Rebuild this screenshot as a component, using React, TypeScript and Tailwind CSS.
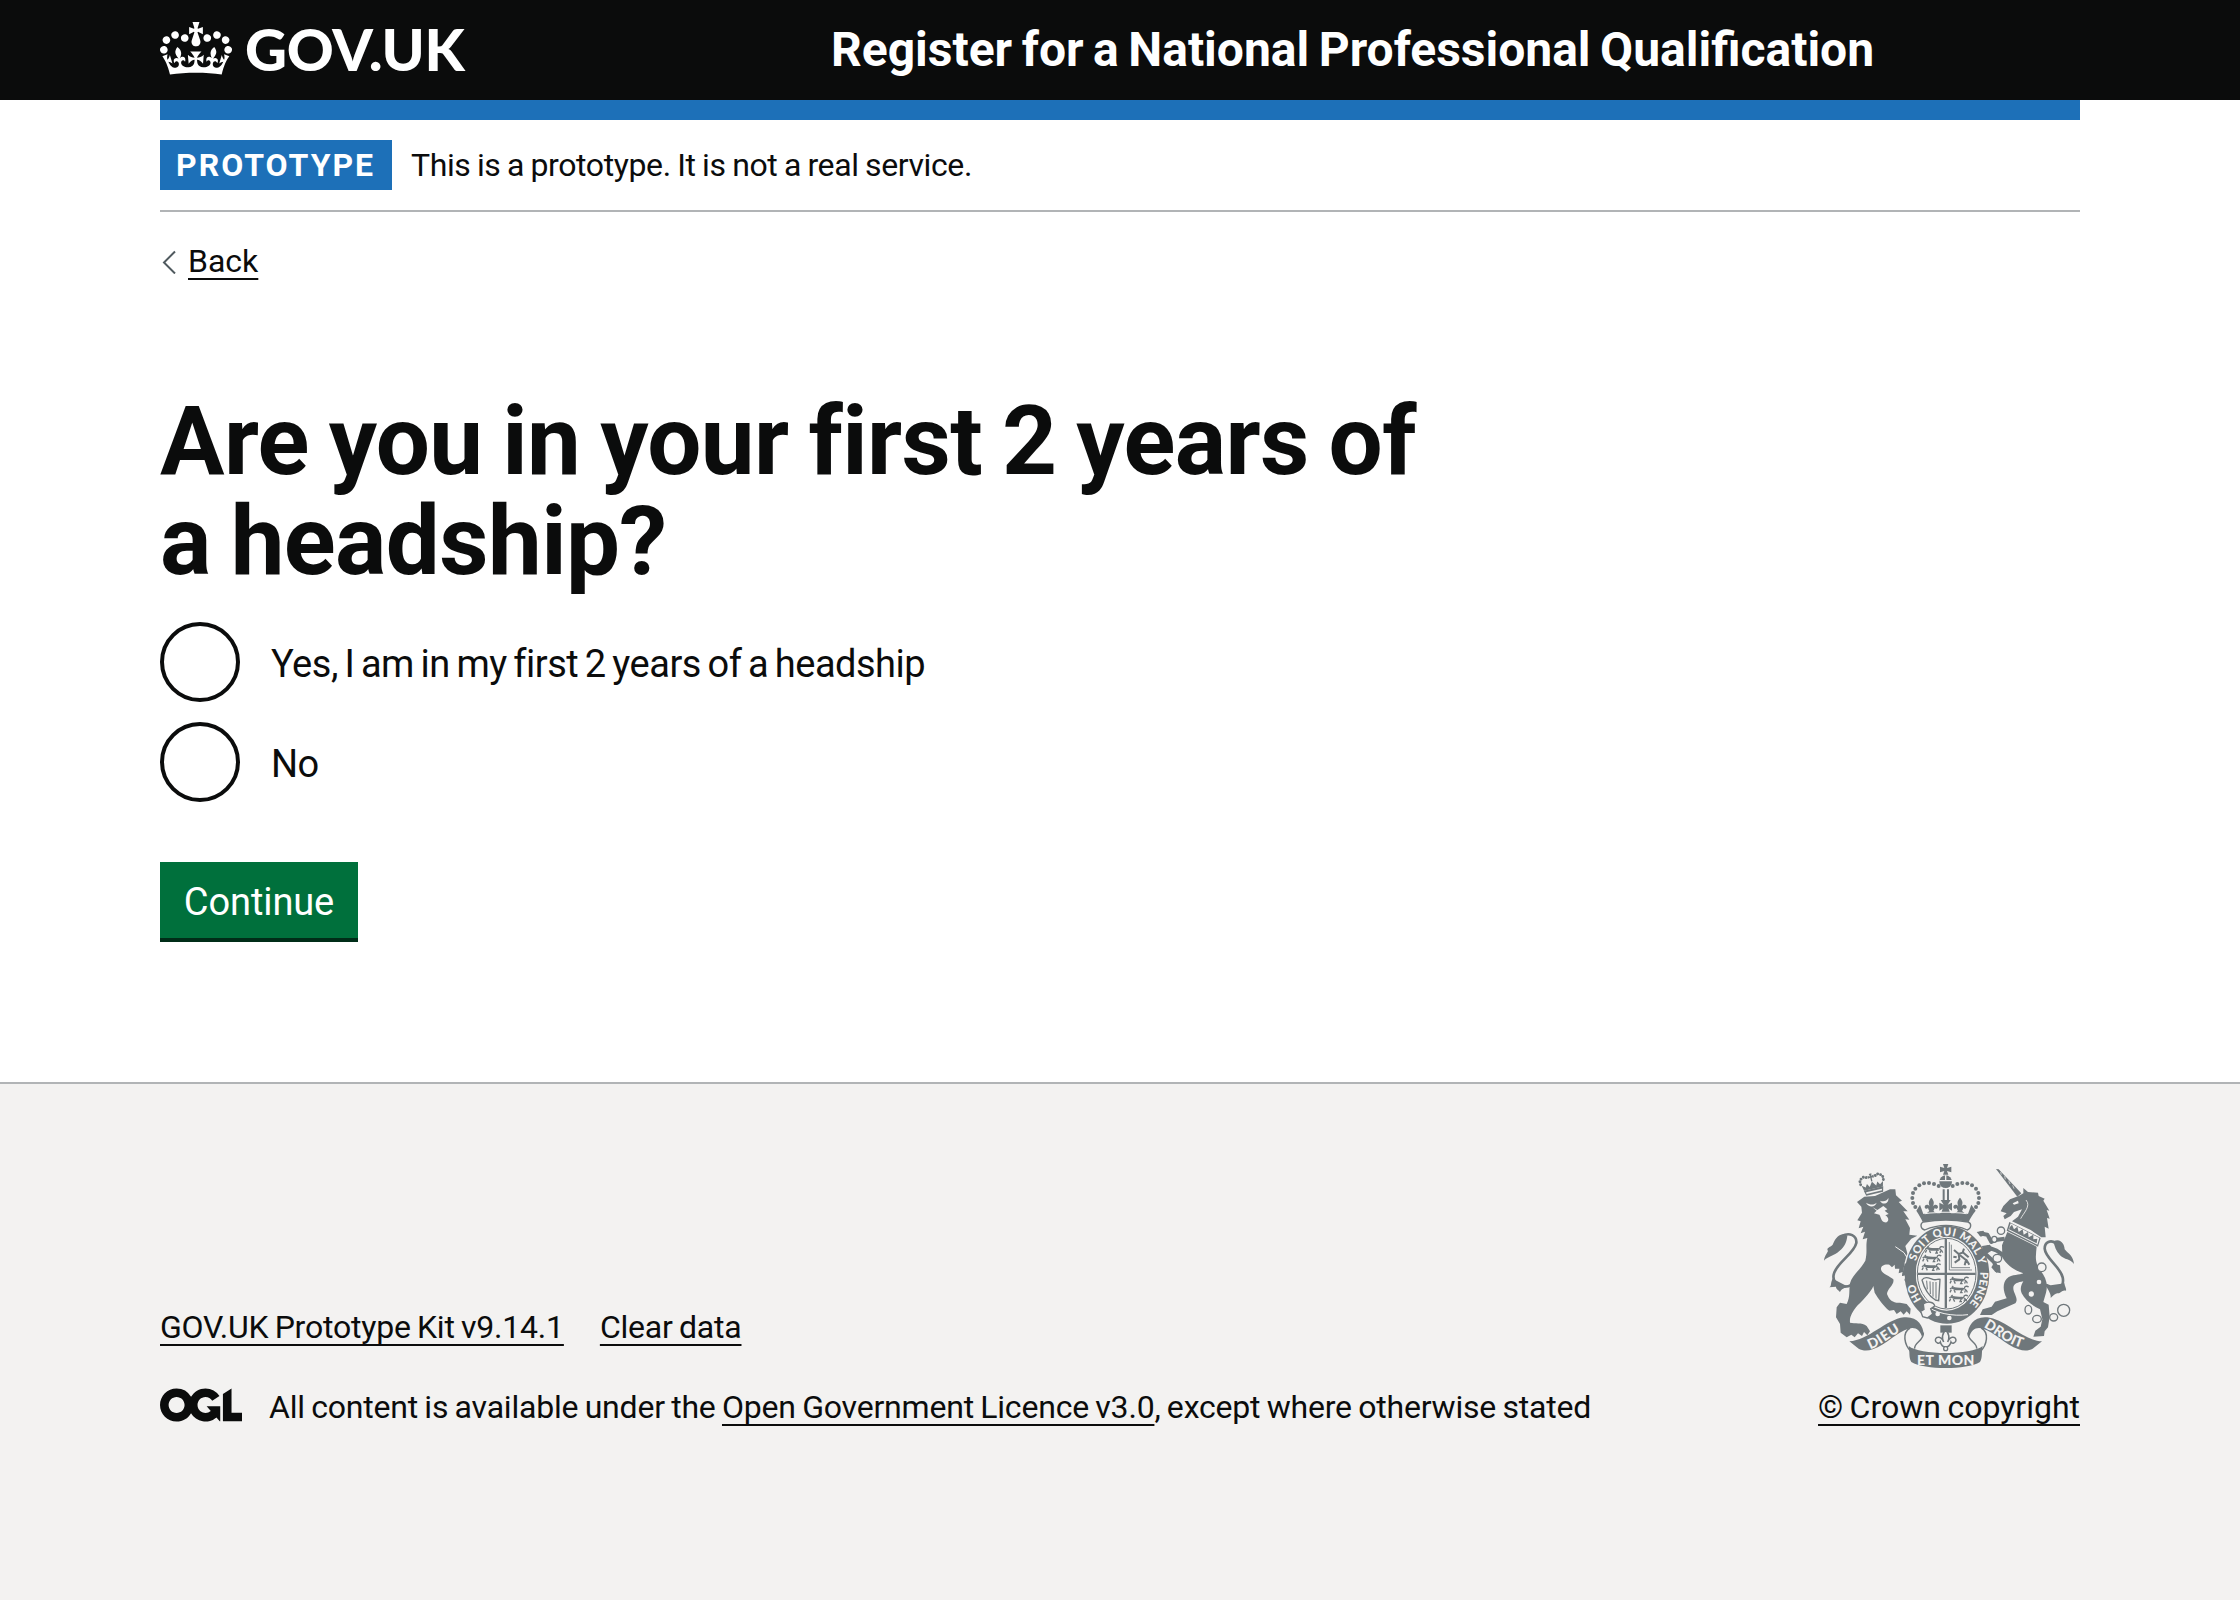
import React from "react";

const LINK =
  "text-[#0b0c0c] underline decoration-2 underline-offset-[6px] [text-decoration-skip-ink:none]";

function Crown() {
  return (
    <svg viewBox="0 0 132 97" className="h-[53px] w-[72px] -translate-y-[2px]" fill="currentColor" aria-hidden="true">
      <path
        fillRule="evenodd"
        d="M25 30.2c3.5 1.5 7.7-.2 9.1-3.7 1.5-3.6-.2-7.8-3.9-9.2-3.6-1.4-7.6.3-9.1 3.9-1.4 3.5.3 7.5 3.9 9zM9 39.5c3.6 1.5 7.8-.2 9.2-3.7 1.5-3.6-.2-7.8-3.9-9.1-3.6-1.5-7.6.2-9.1 3.8-1.4 3.5.3 7.5 3.8 9zM4.4 57.2c3.5 1.5 7.7-.2 9.1-3.8 1.5-3.6-.2-7.7-3.9-9.1-3.5-1.5-7.6.3-9.1 3.8-1.4 3.5.3 7.6 3.9 9.1zm38.3-21.4c3.5 1.5 7.7-.2 9.1-3.8 1.5-3.6-.2-7.7-3.9-9.1-3.6-1.5-7.6.3-9.1 3.8-1.3 3.6.4 7.7 3.9 9.1zm64.4-5.6c-3.6 1.5-7.8-.2-9.1-3.7-1.5-3.6.2-7.8 3.8-9.2 3.6-1.4 7.7.3 9.2 3.9 1.3 3.5-.4 7.5-3.9 9zm15.9 9.3c-3.6 1.5-7.7-.2-9.1-3.7-1.5-3.6.2-7.8 3.7-9.1 3.6-1.5 7.7.2 9.2 3.8 1.5 3.5-.3 7.5-3.8 9zm4.7 17.7c-3.6 1.5-7.8-.2-9.2-3.8-1.5-3.6.2-7.7 3.9-9.1 3.6-1.5 7.7.3 9.2 3.8 1.3 3.5-.4 7.6-3.9 9.1zM89.3 35.8c-3.6 1.5-7.8-.2-9.2-3.8-1.4-3.6.2-7.7 3.9-9.1 3.6-1.5 7.7.3 9.2 3.8 1.4 3.6-.3 7.7-3.9 9.1zM69.7 17.7l8.9 4.7V9.3l-8.9 2.8c-.2-.3-.5-.6-.9-.9L72.4 0H59.6l3.5 11.2c-.3.3-.6.5-.9.9l-8.8-2.8v13.1l8.8-4.7c.3.3.6.7.9.9l-5 15.4v.1c-.2.8-.4 1.6-.4 2.4 0 4.1 3.1 7.5 7 8.1h.2c.3 0 .7.1 1 .1.4 0 .7 0 1-.1h.2c4-.6 7.1-4.1 7.1-8.1 0-.8-.1-1.7-.4-2.4V34l-5.1-15.4c.4-.2.7-.6 1-.9zM66 92.8c16.9 0 32.8 1.1 47.1 3.2 4-16.9 8.9-26.7 14-33.5l-9.6-3.4c1 4.9 1.1 7.2 0 10.2-1.5-1.4-3-4.3-4.2-8.7L108.6 76c2.8-2 5-3.2 7.5-3.3-4.4 9.4-10 11.9-13.6 11.2-4.3-.8-6.3-4.6-5.6-7.9 1-4.7 5.7-5.9 8-.5 4.3-8.7-3-11.4-7.6-8.8 7.1-7.2 7.9-13.5 2.1-21.1-8 6.1-8.1 12.3-4.5 20.8-4.7-5.4-12.1-2.5-9.5 6.2 3.4-5.2 7.9-2 7.2 3.1-.6 4.3-6.4 7.8-13.5 7.2-10.3-.9-10.9-8-11.2-13.8 2.5-.5 7.1 1.8 11 7.3L80.2 60c-4.1 4.4-8 5.3-12.3 5.4 1.4-4.4 8-11.6 8-11.6H55.5s6.4 7.2 7.9 11.6c-4.2-.1-8-1-12.3-5.4l1.4 16.4c3.9-5.5 8.5-7.7 10.9-7.3-.3 5.8-.9 12.8-11.1 13.8-7.2.6-12.9-2.9-13.5-7.2-.7-5 3.8-8.3 7.1-3.1 2.7-8.7-4.6-11.6-9.4-6.2 3.7-8.5 3.6-14.7-4.6-20.8-5.8 7.6-5 13.9 2.2 21.1-4.7-2.6-11.9.1-7.7 8.8 2.3-5.5 7.1-4.2 8.1.5.7 3.3-1.3 7.1-5.7 7.9-3.5.7-9-1.8-13.5-11.2 2.5.1 4.7 1.3 7.5 3.3l-4.7-15.4c-1.2 4.4-2.7 7.2-4.3 8.7-1.1-3-.9-5.3 0-10.2l-9.5 3.4c5 6.9 9.9 16.7 14 33.5 14.8-2.1 30.8-3.2 47.7-3.2z"
      />
    </svg>
  );
}

function OglLogo() {
  return (
    <svg viewBox="0 0 483.2 195.7" className="mt-px h-[34px] w-[82px] shrink-0" fill="#0b0c0c" aria-hidden="true">
      <path d="M421.5 142.8V.1l-50.7 32.3v161.1h112.4v-50.7zm-122.3-9.6A47.12 47.12 0 0 1 221 97.8c0-26 21.1-47.1 47.1-47.1 16.7 0 31.4 8.7 39.7 21.8l42.7-27.2A97.63 97.63 0 0 0 268.1 0c-36.5 0-68.3 20.1-85.1 49.7A98 98 0 0 0 97.8 0C43.9 0 0 43.9 0 97.8s43.9 97.8 97.8 97.8c36.5 0 68.3-20.1 85.1-49.7a97.76 97.76 0 0 0 149.6 25.4l19.4 22.2h3v-87.8h-80l24.3 27.5zM97.8 145c-26 0-47.1-21.1-47.1-47.1s21.1-47.1 47.1-47.1 47.1 21.1 47.1 47.1S123.8 145 97.8 145" />
    </svg>
  );
}

const INK = "#6f777b";
const PAPER = "#f3f2f1";

const ARCH_BEADS = [
  [386, 108],
  [372, 102],
  [357, 99],
  [342, 100],
  [328, 106],
  [316, 116],
  [309, 129],
  [307, 144],
  [309, 159],
  [316, 171],
];

/* Passant lion used in the three rows of the English quarters. */
function Passant({ x, y }: { x: number; y: number }) {
  return (
    <g transform={`translate(${x} ${y})`}>
      <path
        d="M4 10C10 4 16 6 20 9L42 8C50 9 54 13 56 20M8 12L4 20M16 13L20 21M40 12L36 21L42 21M50 14L48 21M10 5L14 1M48 8C46 2 54 0 60 4"
        fill="none"
        stroke={INK}
        strokeWidth="4"
      />
      <path d="M6 8L18 5L42 8L46 14L20 14Z" />
    </g>
  );
}

function Fleur({ x, y }: { x: number; y: number }) {
  return (
    <g transform={`translate(${x} ${y})`}>
      <path d="M0-25C8-16 10-9 4 2C9-6 19-6 20 3C20 9 12 10 10 6C9 12 5 15 3 20H-3C-5 15-9 12-10 6C-12 10-20 9-20 3C-19-6-9-6-4 2C-10-9-8-16 0-25Z" />
    </g>
  );
}

function RoyalArms() {
  return (
    <svg viewBox="42 42 750 612" className="h-[204px] w-[250px]" fill={INK} aria-hidden="true">
      <defs>
        <path id="garter-honi" d="M335 449A99 117 0 0 1 312 364" />
        <path id="garter-motto" d="M318 334A99 117 0 0 1 510 380" />
        <path id="garter-end" d="M510 366A99 117 0 0 1 455 479" />
        <path id="scroll-left" d="M180 597C215 587 243 556 286 537" />
        <path id="scroll-right" d="M520 531C560 552 590 583 640 594" />
      </defs>

      {/* Lion */}
      <path
        fill="none"
        stroke={INK}
        strokeWidth="8"
        d="M126 404C96 420 66 400 71 374C77 340 132 312 139 279C141 256 118 246 96 258"
      />
      <path d="M112 257C86 244 74 270 68 284C60 292 48 293 54 303C50 312 42 320 42 332C54 318 72 318 88 303C104 290 110 276 112 257Z" />
      <path d="M68 386C60 402 66 406 58 412L78 410C78 418 86 420 90 426C94 416 104 416 110 408Z" />
      <path d="M141 156L163 140L195 138L240 118L256 118L258 136L276 152L266 156L293 184L280 184L298 209L286 208L300 234L298 254L322 257L304 266L286 288L292 310L318 342L319 367L312 398L300 398L297 388L288 398L283 388L288 374L276 378L278 366L266 370L268 356L255 356L254 344L246 352L238 344C222 342 212 348 213 358C215 372 240 378 250 388C254 404 232 415 231 432C238 452 252 460 270 458L290 462L302 476L300 494L290 484L281 494L272 484L260 492L252 480L238 482C220 468 205 446 194 428L190 408C185 422 165 445 143 466C128 484 118 500 120 518C135 522 155 516 170 528L180 544L172 556L162 546L156 558L144 550L134 562L124 554L110 562L92 548L90 522L78 502L80 472L90 458L110 462C122 440 116 420 120 400C126 376 152 358 166 332C173 302 166 290 172 264L158 268L165 245L152 250L160 230L146 235L152 214L142 211L156 188L154 170Z" />
      <path fill={PAPER} d="M168 158C178 164 192 166 200 158C196 172 176 174 168 158ZM210 152C220 156 230 154 235 144C238 160 218 168 210 152ZM188 172L202 180L220 168L232 178L224 182L236 192L226 196C240 204 236 220 224 217C212 213 214 202 208 194L192 190L200 182Z" />
      <path fill="none" stroke={PAPER} strokeWidth="3" d="M256 290L282 308L298 334L290 330" />
      <g transform="rotate(-13 188 105)">
        <path d="M158 116H218L214 132H162Z" />
        <path fill={PAPER} d="M164 122H212V127H164Z" />
        <path d="M159 116L155 100L166 108L172 98L178 109L188 95L198 109L204 98L210 108L221 100L217 116Z" />
        <path d="M184 70H192L190 78L197 75V84L190 82V94H186V82L179 84V75L186 78Z" />
        {[
          [153, 96],
          [153, 87],
          [158, 80],
          [166, 76],
          [174, 79],
          [202, 79],
          [210, 76],
          [218, 80],
          [223, 87],
          [223, 96],
        ].map(([x, y]) => (
          <circle key={`${x}-${y}`} cx={x} cy={y} r="4.4" />
        ))}
      </g>

      {/* Unicorn */}
      <path
        fill="none"
        stroke={INK}
        strokeWidth="8"
        d="M708 404C740 430 764 412 758 382C750 348 706 326 704 296C704 276 722 268 738 280"
      />
      <path d="M730 274C752 262 764 284 764 298C776 312 790 318 792 342C780 326 764 330 750 316C738 304 734 290 730 274ZM704 400L722 406L764 400C762 406 770 414 768 422C756 418 752 430 744 430C738 428 730 436 722 444C724 430 712 418 704 400Z" />
      <path d="M558 57L566 58L634 130L622 140Z" />
      <path fill="none" stroke={PAPER} strokeWidth="2" d="M572 66L574 74M584 78L586 88M596 92L600 102M608 106L612 116" />
      <path d="M640 114L654 126L684 128L686 138L704 146L700 152L718 182L710 180L719 206L711 204L716 236L704 230L707 262L694 262L662 240L606 214L624 200L636 178L612 186L602 198L584 208L580 198L590 190L572 184L580 168L600 148L626 138L640 130Z" />
      <path fill={PAPER} d="M608 160L624 152L626 160L612 164Z" />
      <path fill="none" stroke={PAPER} strokeWidth="2.5" d="M648 150C664 168 640 190 632 206" />
      <path d="M598 216L692 264L684 290L590 242Z" />
      <path fill={PAPER} d="M602 220L688 264L682 284L595 240Z" />
      <path d="M599 232L606 224L612 238L622 230L626 246L638 238L641 254L654 246L656 262L670 254L670 268L682 266L680 280L597 238Z" />
      <path d="M592 246L680 290C678 314 672 336 692 362C707 382 715 402 708 428L700 456L716 464L719 500L714 532L704 544L702 558L670 560L676 542L692 530L697 508L690 478C668 468 645 450 635 430C628 414 636 402 640 394C620 398 604 402 612 425C618 440 624 450 616 460L562 484L545 495L510 495L518 478L545 470L555 455L590 445C578 420 578 400 590 386C606 372 630 376 640 370C614 362 590 345 577 322L576 286Z" />

      {/* Garter and shield */}
      <ellipse cx="411" cy="374" rx="131" ry="151" fill={PAPER} />
      <ellipse cx="411" cy="374" rx="127" ry="147" />
      <ellipse cx="410" cy="371" rx="93" ry="111" fill={PAPER} />
      <ellipse cx="410" cy="371" rx="88" ry="106" fill="none" stroke={INK} strokeWidth="3" />
      <path d="M404 266H411V474H404ZM323 368H497V375H323Z" />
      <Passant x={342} y={288} />
      <Passant x={334} y={314} />
      <Passant x={332} y={340} />
      <Passant x={416} y={380} />
      <Passant x={416} y={407} />
      <Passant x={414} y={434} />
      <path fill="none" stroke={INK} strokeWidth="2.5" d="M418 276V360H486M424 284V353H480" />
      <path
        fill="none"
        stroke={INK}
        strokeWidth="6"
        strokeLinejoin="round"
        d="M432 300L446 312L458 308L462 296M446 312L448 328L434 338M450 316L468 330L464 346M460 308L476 322M440 322L430 320M468 328L478 344"
      />
      <path
        fill="none"
        stroke={INK}
        strokeWidth="4"
        d="M336 390C344 378 356 384 368 388C378 392 384 386 390 388L386 452L376 450C360 440 344 420 336 390Z"
      />
      <path fill="none" stroke={INK} strokeWidth="3" d="M350 392L352 418M360 394L361 432M369 396L369 440M378 396L378 446" />
      <path fill="none" stroke={PAPER} strokeWidth="3" d="M344 462C370 490 430 500 474 494" />
      <path fill={PAPER} stroke={INK} strokeWidth="4" d="M340 462C352 452 372 456 374 468L362 476L368 492L352 504L338 500L332 484L342 478Z" />
      <circle cx="383" cy="492" r="7" fill={PAPER} />
      <circle cx="418" cy="504" r="7" fill={PAPER} />
      <g fill={PAPER} fontFamily="Lato" fontSize="33" fontWeight="900">
        <text>
          <textPath href="#garter-honi">HO</textPath>
        </text>
        <text letterSpacing="1.5">
          <textPath href="#garter-motto">SOIT QUI MAL Y</textPath>
        </text>
        <text>
          <textPath href="#garter-end">PENSE</textPath>
        </text>
      </g>
      <path d="M284 340L318 352L318 396L304 400L299 390L289 400L283 390L288 376L276 378Z" />
      <path
        fill="none"
        stroke={INK}
        strokeWidth="12"
        strokeLinejoin="round"
        d="M584 266L556 270L544 276L532 254L508 250M584 318L560 302L534 292L524 310L552 336L564 366"
      />
      <path d="M500 246L520 242L528 254L512 260ZM516 288L540 284L548 300L520 318ZM550 342L570 346L572 370L556 366L544 352Z" />
      <g fill={PAPER} stroke={INK} strokeWidth="4">
        <ellipse cx="573" cy="242" rx="11" ry="11" />
        <ellipse cx="553" cy="268" rx="8" ry="9" />
        <ellipse cx="562" cy="325" rx="13" ry="12" />
        <circle cx="695" cy="352" r="13" />
        <circle cx="687" cy="396" r="9" />
        <circle cx="664" cy="432" r="10" />
        <ellipse cx="655" cy="479" rx="10" ry="13" />
        <ellipse cx="681" cy="507" rx="13" ry="11" />
        <ellipse cx="731" cy="502" rx="12" ry="11" />
        <circle cx="761" cy="481" r="18" />
      </g>

      {/* Crown */}
      <path d="M399 42H415L411 54L424 50V67L411 63L415 74H399L403 63L390 67V50L403 54Z" />
      <circle cx="407" cy="95" r="19" />
      <path fill={PAPER} d="M388 90H426V94H388ZM405 76H409V92H405Z" />
      <path d="M398 118H404V152H398ZM411 118H417V152H411Z" />
      {ARCH_BEADS.map(([x, y]) => (
        <React.Fragment key={`${x}-${y}`}>
          <circle cx={x} cy={y} r="6" />
          <circle cx={814 - x} cy={y} r="6" />
        </React.Fragment>
      ))}
      <path d="M319 182L330 164L340 192C350 190 356 186 358 182H370C376 190 386 192 394 188L400 170H414L420 188C428 192 438 190 444 182H456C460 188 466 190 474 192L484 164L497 182C486 196 480 206 476 216C430 208 384 208 338 216C334 206 328 196 319 182Z" />
      <Fleur x={364} y={168} />
      <Fleur x={450} y={168} />
      <path d="M392 150H422L413 164L426 158V182L413 174H401L388 182V158L401 164Z" />
      <path fill={PAPER} d="M344 190C384 184 430 184 470 190V193C430 187 384 187 344 193Z" />
      <path
        fill={PAPER}
        stroke={INK}
        strokeWidth="4"
        d="M340 216C386 208 430 208 474 216C486 220 484 236 472 240C430 222 386 222 344 240C330 236 330 220 340 216Z"
      />

      {/* Scroll */}
      <path d="M391 526H425V548H391Z" />
      <path
        fill={PAPER}
        stroke={INK}
        strokeWidth="4.5"
        d="M407 540C418 552 420 562 413 576C418 560 436 556 438 570C438 580 426 582 423 576C421 586 414 590 411 590H403C400 590 393 586 391 576C388 582 376 580 376 570C378 556 396 560 401 576C394 562 396 552 407 540Z"
      />
      <circle cx="407" cy="596" r="6" fill={PAPER} stroke={INK} strokeWidth="4" />
      <path d="M118 574C175 572 228 508 282 502C322 498 340 528 341 552L336 560C330 540 316 530 296 536C262 544 230 584 188 598C172 604 156 602 146 596Z" />
      <path d="M696 574C639 572 586 508 532 502C492 498 474 528 473 552L478 560C484 540 498 530 518 536C552 544 584 584 626 598C642 604 658 602 668 596Z" />
      <path
        fill="none"
        stroke={INK}
        strokeWidth="4.5"
        d="M340 548C342 574 312 576 314 596M300 534C276 548 282 584 304 606M474 548C472 574 502 576 500 596M514 534C538 548 532 584 510 606"
      />
      <path d="M296 588C330 616 484 616 518 588C514 608 518 622 510 636C470 660 344 660 304 636C296 622 300 608 296 588Z" />
      <g fill={PAPER} fontFamily="Lato" fontSize="42" fontWeight="900">
        <text letterSpacing="2">
          <textPath href="#scroll-left">DIEU</textPath>
        </text>
        <text>
          <textPath href="#scroll-right">DROIT</textPath>
        </text>
        <text x="321" y="644" letterSpacing="1.5">
          ET MON
        </text>
      </g>
    </svg>
  );
}

function Radio({ label }: { label: string }) {
  return (
    <label className="flex h-20 items-center">
      <input
        type="radio"
        name="headship"
        className="size-20 shrink-0 appearance-none rounded-full border-4 border-[#0b0c0c] bg-white"
      />
      <span className="ml-[31px] translate-y-[2px] text-[38px] leading-[50px] tracking-[-0.5px] [word-spacing:-2.3px]">
        {label}
      </span>
    </label>
  );
}

export default function App() {
  return (
    <div className="flex min-h-[1600px] flex-col bg-white font-['Roboto',sans-serif] text-[#0b0c0c]">
      <header className="h-[100px] bg-[#0b0c0c] text-white">
        <div className="mx-auto flex h-full w-[1920px] items-center">
          <a className="flex w-[671px] items-center gap-[13px]">
            <Crown />
            <span className="-translate-y-px font-['Lato'] text-[58px] leading-none font-black tracking-[-0.2px]">
              GOV.UK
            </span>
          </a>
          <a className="text-5xl leading-none font-bold whitespace-nowrap [word-spacing:-2.4px]">
            Register for a National Professional Qualification
          </a>
        </div>
      </header>

      <div className="mx-auto w-[1920px]">
        <div className="h-5 bg-[#1d70b8]" />
        <div className="flex items-center border-b-2 border-[#b1b4b6] py-5">
          <strong className="flex h-[50px] w-[232px] items-center bg-[#1d70b8] pl-4 text-[32px] leading-none font-bold tracking-[2px] text-white">
            PROTOTYPE
          </strong>
          <span className="ml-[19px] text-[32px] leading-10 tracking-[-0.4px] [word-spacing:-1px]">
            This is a prototype. It is not a real service.
          </span>
        </div>

        <a className="mt-[29px] flex h-10 items-center">
          <svg viewBox="0 0 14 24" className="ml-[2px] h-6 w-[14px] translate-y-px" fill="none" stroke="#505a5f" strokeWidth="2">
            <path d="M13 1.5L2 12.5L13 23.5" />
          </svg>
          <span className={`ml-3 text-[32px] leading-10 ${LINK}`}>Back</span>
        </a>

        <main className="mt-[110px] pb-[140px]">
          <h1 className="text-[96px] leading-[100px] font-bold tracking-[-0.6px] [word-spacing:-3.4px]">
            Are you in your first 2 years of
            <br />a headship?
          </h1>
          <div className="mt-[31px] flex flex-col gap-5">
            <Radio label="Yes, I am in my first 2 years of a headship" />
            <Radio label="No" />
          </div>
          <button className="mt-[60px] h-20 w-[198px] border-b-4 border-[#002d18] bg-[#00703c] pt-1 text-[38px] leading-[72px] tracking-[-0.1px] text-white">
            Continue
          </button>
        </main>
      </div>

      <footer className="grow border-t-2 border-[#b1b4b6] bg-[#f3f2f1] text-[32px] leading-10">
        <div className="mx-auto flex w-[1920px] items-end justify-between pt-20">
          <div>
            <div className="flex gap-9 tracking-[-0.2px] [word-spacing:-1.5px]">
              <a className={LINK}>GOV.UK Prototype Kit v9.14.1</a>
              <a className={LINK}>Clear data</a>
            </div>
            <div className="mt-10 flex">
              <OglLogo />
              <span className="ml-[27px] tracking-[-0.2px] [word-spacing:-1.4px]">
                All content is available under the <a className={LINK}>Open Government Licence v3.0</a>, except where
                otherwise stated
              </span>
            </div>
          </div>
          <a className="flex flex-col items-center">
            <RoyalArms />
            <span className={`mt-[19px] [word-spacing:-1.5px] ${LINK}`}>© Crown copyright</span>
          </a>
        </div>
      </footer>
    </div>
  );
}
